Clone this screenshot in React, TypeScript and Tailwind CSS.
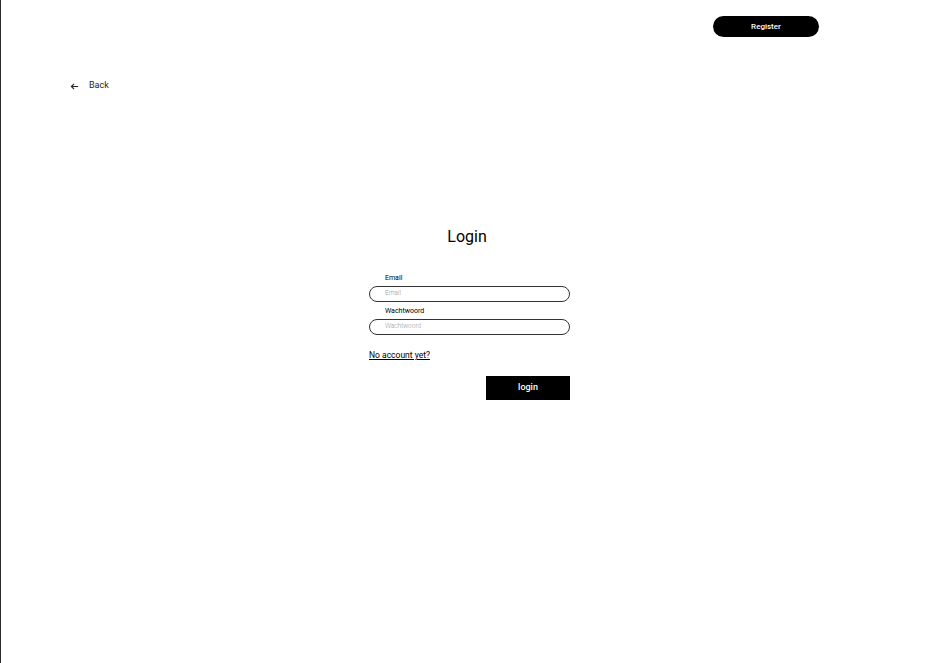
import React from "react";

export default function App() {
  return (
    <div
      className="w-[935px] h-[663px] bg-white border-l border-[#2a2a2a] overflow-hidden"
      style={{ fontFamily: "Roboto, 'Liberation Sans', sans-serif" }}
    >
      <div className="flex justify-end pr-[116px] pt-[16px]">
        <button className="w-[106px] h-[21px] rounded-full bg-black text-white text-[8px] font-medium leading-none">
          Register
        </button>
      </div>
      <div className="flex items-center pl-[69px] mt-[42px] h-[14px] gap-[10px] text-[9px] text-[#222]">
        <svg width="9" height="9" viewBox="0 0 10 10" fill="none" stroke="#222" strokeWidth="1.2">
          <path d="M9 5H1.5M4.5 2L1.5 5l3 3" />
        </svg>
        <span>Back</span>
      </div>
      <div className="mt-[134px] w-[932px] text-center text-[16px] leading-[20px] text-black">
        Login
      </div>
      <div className="ml-[368px] w-[201px] mt-[26px] flex flex-col">
        <label className="pl-[16px] text-[7px] leading-[10px] text-black">Email</label>
        <div className="mt-[3px] h-[16px] rounded-full border border-[#333] flex items-center pl-[15px] text-[6.5px] text-[#999] font-light">
          Email
        </div>
        <label className="pl-[16px] mt-[4px] text-[7px] leading-[10px] text-black">Wachtwoord</label>
        <div className="mt-[3px] h-[16px] rounded-full border border-[#333] flex items-center pl-[15px] text-[6.5px] text-[#999] font-light">
          Wachtwoord
        </div>
        <a className="mt-[15px] text-[8.5px] leading-[10px] underline text-black w-fit">No account yet?</a>
        <div className="flex justify-end mt-[16px]">
          <button className="w-[84px] h-[24px] bg-black text-white text-[9px] font-medium">login</button>
        </div>
      </div>
    </div>
  );
}
